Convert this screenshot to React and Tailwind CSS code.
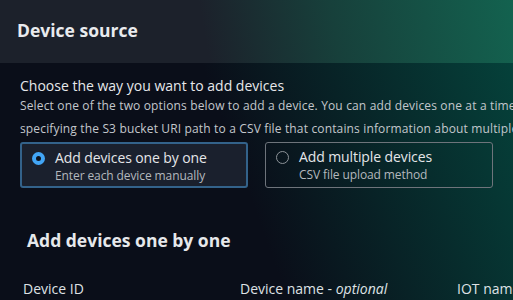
import React, { useState } from 'react';

const options = [
  { id: 'single', label: 'Add devices one by one', hint: 'Enter each device manually' },
  { id: 'multiple', label: 'Add multiple devices', hint: 'CSV file upload method' },
];

function RadioCard({ option, selected, onSelect }) {
  return (
    <button
      type="button"
      onClick={() => onSelect(option.id)}
      className={`flex items-start gap-[10px] w-[229px] h-[46px] pl-[10px] pt-[6px] rounded-[3px] text-left ${
        selected ? 'border-2 border-[#33628a] bg-[#1a202d]' : 'border-[1.5px] border-[#6e747b]'
      }`}
    >
      {selected ? (
        <span className="mt-[2px] w-[13px] h-[13px] shrink-0 rounded-full border-[4px] border-[#42a5f5] bg-[#0e131d]" />
      ) : (
        <span className="mt-[2px] w-[13px] h-[13px] shrink-0 rounded-full border-[1.5px] border-[#8d9399]" />
      )}
      <span className="flex flex-col">
        <span className="text-[14px] leading-[16px] font-medium text-[#e4e6e9] tracking-[-0.1px]">{option.label}</span>
        <span className="mt-[2px] text-[12px] leading-[15px] text-[#b4b8bd] tracking-[-0.1px]">{option.hint}</span>
      </span>
    </button>
  );
}

export default function App() {
  const [source, setSource] = useState('single');

  return (
    <div className="w-[513px] h-[300px] overflow-hidden font-['Open_Sans',sans-serif] bg-[#0a0e19]">
      {/* Panel header */}
      <div className="h-[63px] flex items-center px-[17px] bg-[linear-gradient(260deg,#13624f_0%,#17403b_35%,#1c212b_60%)]">
        <h2 className="text-[17.5px] font-bold text-[#e9ebee] -mt-[2px]">Device source</h2>
      </div>

      {/* Panel body */}
      <div className="h-[237px] bg-[linear-gradient(250deg,#05413a_0%,#0a0e19_52%)]">
        <div className="px-[20px] pt-[15px]">
          <div className="text-[14px] leading-[16px] font-medium text-[#e6e8eb] whitespace-nowrap">
            Choose the way you want to add devices
          </div>
          <div className="text-[12px] leading-[23px] tracking-[0.15px] text-[#c3c7cc] whitespace-nowrap">
            <div>Select one of the two options below to add a device. You can add devices one at a time, or add multiple devices at once by</div>
            <div>specifying the S3 bucket URI path to a CSV file that contains information about multiple devices.</div>
          </div>

          <div className="mt-[2px] flex gap-[17px]">
            {options.map(o => (
              <RadioCard key={o.id} option={o} selected={source === o.id} onSelect={setSource} />
            ))}
          </div>
        </div>

        <h3 className="mt-[42px] pl-[27px] text-[17.5px] leading-[20px] font-bold text-[#e6e8eb]">
          Add devices one by one
        </h3>

        <div className="mt-[31px] pl-[23px] grid grid-cols-[217px_217px_217px] text-[14px] leading-[16px] font-medium text-[#dfe2e5] whitespace-nowrap">
          <span>Device ID</span>
          <span>Device name - <i className="font-medium">optional</i></span>
          <span>IOT name</span>
        </div>
      </div>
    </div>
  );
}
